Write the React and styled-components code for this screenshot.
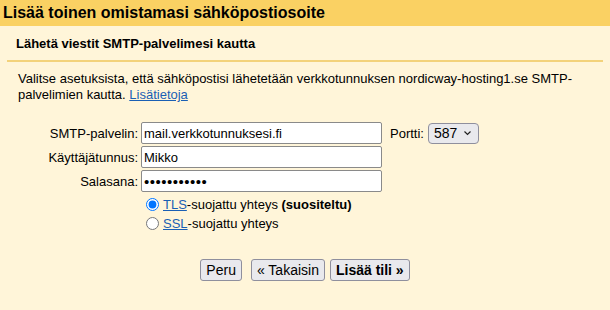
import React from "react";
import styled, { createGlobalStyle } from "styled-components";

const GlobalStyle = createGlobalStyle`
  html, body {
    margin: 0;
    height: 100%;
    background: #fff5d9;
  }
  body {
    font-family: Arial, "Liberation Sans", sans-serif;
    color: #000;
  }
`;

const Page = styled.div`
  width: 610px;
  height: 310px;
  background: #fff5d9;
  overflow: hidden;
`;

const Header = styled.h1`
  margin: 0;
  height: 26px;
  line-height: 26px;
  padding-left: 3px;
  background: #fad163;
  font-size: 16px;
  font-weight: bold;
`;

const SubHeader = styled.h2`
  margin: 0 7px;
  height: 34px;
  display: flex;
  align-items: center;
  padding-left: 9px;
  border-bottom: 2px solid #f3d27a;
  font-size: 13px;
  font-weight: bold;
`;

const Intro = styled.p`
  margin: 9px 0 0;
  padding: 0 30px 0 18px;
  font-size: 13px;
  line-height: 16px;
`;

const Link = styled.a`
  color: #1a5fb4;
  text-decoration: underline;
  cursor: pointer;
`;

const Form = styled.div`
  margin-top: 19px;
  display: grid;
  grid-template-columns: 138px 241px auto;
  column-gap: 3px;
  row-gap: 2px;
  align-items: center;
`;

const Label = styled.label`
  text-align: right;
  font-size: 13px;
  align-self: start;
  padding-top: 4px;
`;

const TextInput = styled.input`
  box-sizing: border-box;
  height: 22px;
  width: 241px;
  margin: 0;
  padding: 1px 2px;
  border: 1px solid #8a8a8a;
  border-radius: 2px;
  background: #fff;
  font-family: Arial, "Liberation Sans", sans-serif;
  font-size: ${p => (p.type === "password" ? "15px" : "13px")};
  letter-spacing: ${p => (p.type === "password" ? "0.5px" : "0")};
  color: #000;
  outline: none;
`;

const PortCell = styled.div`
  display: flex;
  align-items: center;
  gap: 4px;
  padding-left: 5px;
  font-size: 13px;
`;

const FakeSelect = styled.div`
  box-sizing: border-box;
  display: flex;
  align-items: center;
  justify-content: space-between;
  width: 51px;
  height: 21px;
  padding: 0 6px 0 5px;
  background: #e9e9ed;
  border: 1px solid #8f8f9d;
  border-radius: 4px;
  font-size: 14px;
`;

const RadioGroup = styled.div`
  grid-column: 2 / 4;
  margin-top: 1px;
  display: flex;
  flex-direction: column;
`;

const RadioRow = styled.label`
  display: flex;
  align-items: center;
  height: 19px;
  font-size: 13px;
`;

const Radio = styled.input`
  width: 13px;
  height: 13px;
  margin: 0 4px 0 5px;
  accent-color: #0075ff;
`;

const Buttons = styled.div`
  margin-top: 26px;
  display: flex;
  justify-content: center;
`;

const Button = styled.button`
  box-sizing: border-box;
  height: 22px;
  padding: 0 5px;
  margin-left: ${p => p.$gap || 0}px;
  background: #e9e9ed;
  border: 1px solid #8f8f9d;
  border-radius: 3px;
  font-family: Arial, "Liberation Sans", sans-serif;
  font-size: 14px;
  font-weight: ${p => (p.$primary ? "bold" : "normal")};
  color: #000;
`;

function Chevron() {
  return (
    <svg width="9" height="6" viewBox="0 0 9 6">
      <path d="M1.5 1.5 L4.5 4.5 L7.5 1.5" fill="none" stroke="#222" strokeWidth="1.2" />
    </svg>
  );
}

export default function App() {
  return (
    <Page>
      <GlobalStyle />
      <Header>Lisää toinen omistamasi sähköpostiosoite</Header>
      <SubHeader>Lähetä viestit SMTP-palvelimesi kautta</SubHeader>
      <Intro>
        <span>Valitse asetuksista, että sähköpostisi lähetetään verkkotunnuksen nordicway-hosting1.se SMTP-</span>
        <br />
        <span>palvelimien kautta.</span> <Link>Lisätietoja</Link>
      </Intro>
      <Form>
        <Label>SMTP-palvelin:</Label>
        <TextInput defaultValue="mail.verkkotunnuksesi.fi" />
        <PortCell>
          Portti:
          <FakeSelect>
            587
            <Chevron />
          </FakeSelect>
        </PortCell>
        <Label>Käyttäjätunnus:</Label>
        <TextInput defaultValue="Mikko" />
        <span />
        <Label>Salasana:</Label>
        <TextInput type="password" defaultValue="salasana123" />
        <span />
        <RadioGroup>
          <RadioRow>
            <Radio type="radio" name="sec" defaultChecked />
            <span>
              <Link>TLS</Link>-suojattu yhteys <b>(suositeltu)</b>
            </span>
          </RadioRow>
          <RadioRow>
            <Radio type="radio" name="sec" />
            <span>
              <Link>SSL</Link>-suojattu yhteys
            </span>
          </RadioRow>
        </RadioGroup>
      </Form>
      <Buttons>
        <Button>Peru</Button>
        <Button $gap={9}>« Takaisin</Button>
        <Button $gap={5} $primary>Lisää tili »</Button>
      </Buttons>
    </Page>
  );
}
